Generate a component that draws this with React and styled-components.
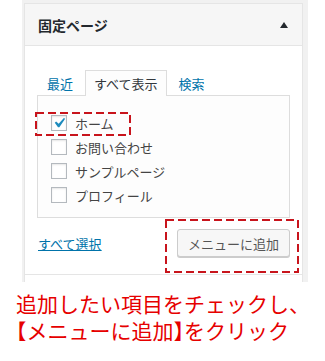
import React from 'react'
import styled, { createGlobalStyle } from 'styled-components'

const GlobalStyle = createGlobalStyle`
    body {
        margin: 0;
        background: #fff;
        font-family: "Noto Sans CJK JP", "Noto Sans", sans-serif;
        color: #444;
    }
`

const Page = styled.div`
    width: 325px;
    height: 361px;
    overflow: hidden;
`

const Backdrop = styled.div`
    margin-left: 22px;
    width: 286px;
    box-sizing: border-box;
    padding: 3px 5px 0 2px;
    background: #f1f1f1;
`

const Panel = styled.div`
    border: 1px solid #e5e5e5;
    border-bottom: none;
    background: #fff;
`

const Header = styled.div`
    height: 41px;
    display: flex;
    align-items: center;
    justify-content: space-between;
    padding: 0 14px 0 13px;
    background: #f6f6f6;
    border-bottom: 1px solid #e5e5e5;
`

const Title = styled.h2`
    margin: 0;
    font-size: 14px;
    font-weight: 600;
    color: #23282d;
    line-height: 1;
`

const Body = styled.div`
    padding: 24px 12px 0;
`

const Tabs = styled.div`
    display: flex;
    align-items: stretch;
    gap: 2px;
    height: 26px;
    margin-bottom: -1px;
    position: relative;
    z-index: 1;
`

const Tab = styled.div`
    display: flex;
    align-items: center;
    padding: 0 ${p => (p.$active ? '8px' : '9px')};
    font-size: 13px;
    color: ${p => (p.$active ? '#32373c' : '#0073aa')};
    background: ${p => (p.$active ? '#fdfdfd' : 'transparent')};
    border: 1px solid ${p => (p.$active ? '#ddd' : 'transparent')};
    border-bottom: none;
`

const TabsPanel = styled.div`
    border: 1px solid #ddd;
    background: #fdfdfd;
    padding: 15px 0 10px 13px;
`

const Row = styled.label`
    position: relative;
    display: flex;
    align-items: center;
    gap: 8px;
    height: 24px;
    font-size: 13px;
    color: #444;
`

const Box = styled.span`
    width: 16px;
    height: 16px;
    box-sizing: border-box;
    border: 1px solid #b4b9be;
    background: #fff;
    box-shadow: inset 0 1px 2px rgba(0, 0, 0, 0.1);
    display: flex;
    align-items: center;
    justify-content: center;
    flex-shrink: 0;

    svg {
        flex-shrink: 0;
    }
`

const Controls = styled.div`
    display: flex;
    justify-content: space-between;
    align-items: center;
    padding: 11px 0 17px 1px;
`

const SelectAll = styled.a`
    font-size: 13px;
    color: #0073aa;
    text-decoration: underline;
    cursor: pointer;
`

const ButtonSpot = styled.div`
    position: relative;
`

const Button = styled.button`
    height: 28px;
    padding: 0 10px;
    font-family: inherit;
    font-size: 13px;
    color: #555;
    background: #f7f7f7;
    border: 1px solid #ccc;
    border-radius: 3px;
    box-shadow: 0 1px 0 #ccc;
    cursor: pointer;
`

const Footer = styled.div`
    height: 7px;
    border-top: 1px solid #e5e5e5;
`

const Mark = styled.svg`
    position: absolute;
    left: ${p => p.$left}px;
    top: ${p => p.$top}px;
    overflow: visible;
    pointer-events: none;
`

const Note = styled.p`
    margin: 0;
    padding: 8px 0 0 16px;
    font-size: 21px;
    line-height: 27px;
    color: #e60000;
    font-feature-settings: "halt";
    white-space: nowrap;
`

const DashedMark = ({ left, top, width, height }) => (
    <Mark $left={left} $top={top} width={width} height={height}>
        <rect x="1" y="1" width={width - 2} height={height - 2} fill="none"
            stroke="#c8141c" strokeWidth="2" strokeDasharray="8 4" />
    </Mark>
)

const Check = () => (
    <svg width="20" height="20" viewBox="0 0 20 20">
        <path d="M14.83 4.89l1.34.94-5.81 8.38H9.02L5.78 9.67l1.34-1.25 2.57 2.4z" fill="#1e8cbe" />
    </svg>
)

const pages = [
    { name: 'ホーム', checked: true },
    { name: 'お問い合わせ' },
    { name: 'サンプルページ' },
    { name: 'プロフィール' },
]

const App = () => {
    return (
        <Page>
            <GlobalStyle />
            <Backdrop>
                <Panel>
                    <Header>
                        <Title>固定ページ</Title>
                        <svg width="8" height="6" viewBox="0 0 8 6">
                            <polygon points="4,0 8,6 0,6" fill="#23282d" />
                        </svg>
                    </Header>
                    <Body>
                        <Tabs>
                            <Tab>最近</Tab>
                            <Tab $active>すべて表示</Tab>
                            <Tab>検索</Tab>
                        </Tabs>
                        <TabsPanel>
                            {pages.map(p => (
                                <Row key={p.name}>
                                    <Box>{p.checked && <Check />}</Box>
                                    {p.name}
                                    {p.checked && <DashedMark left={-16} top={1} width={96} height={24} />}
                                </Row>
                            ))}
                        </TabsPanel>
                        <Controls>
                            <SelectAll>すべて選択</SelectAll>
                            <ButtonSpot>
                                <Button>メニューに追加</Button>
                                <DashedMark left={-12} top={-10} width={134} height={54} />
                            </ButtonSpot>
                        </Controls>
                    </Body>
                    <Footer />
                </Panel>
            </Backdrop>
            <Note>
                追加したい項目をチェックし、<br />
                【メニューに追加】をクリック
            </Note>
        </Page>
    )
}

export default App
